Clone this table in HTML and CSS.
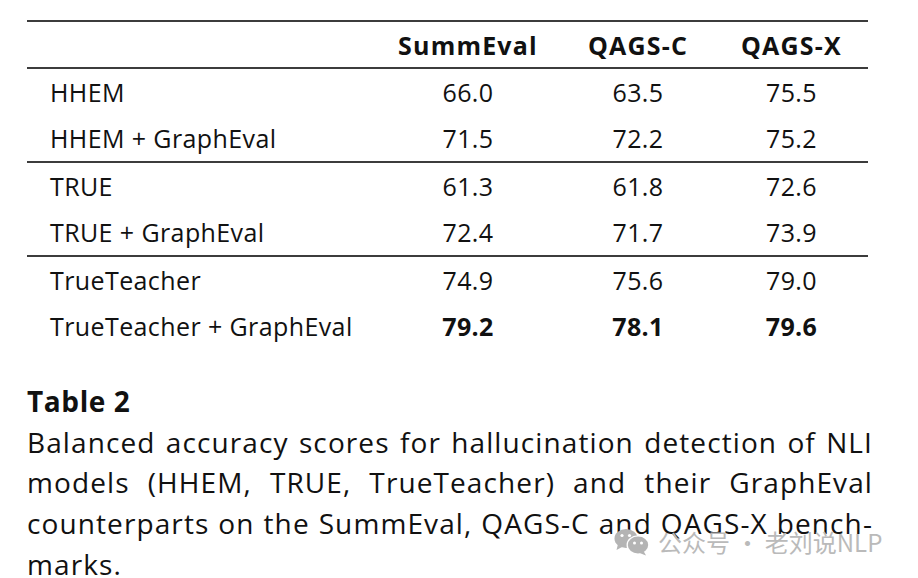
FILE: index.html
```html
<!DOCTYPE html>
<html>
<head>
<meta charset="utf-8">
<link rel="stylesheet" href="styles.css">
</head>
<body>
<div class="page">
  <div class="table">
    <div class="row head">
      <div class="cell label"></div>
      <div class="cell">SummEval</div>
      <div class="cell">QAGS-C</div>
      <div class="cell">QAGS-X</div>
    </div>
    <div class="row">
      <div class="cell label">HHEM</div>
      <div class="cell">66.0</div>
      <div class="cell">63.5</div>
      <div class="cell">75.5</div>
    </div>
    <div class="row group-end">
      <div class="cell label">HHEM + GraphEval</div>
      <div class="cell">71.5</div>
      <div class="cell">72.2</div>
      <div class="cell">75.2</div>
    </div>
    <div class="row">
      <div class="cell label">TRUE</div>
      <div class="cell">61.3</div>
      <div class="cell">61.8</div>
      <div class="cell">72.6</div>
    </div>
    <div class="row group-end">
      <div class="cell label">TRUE + GraphEval</div>
      <div class="cell">72.4</div>
      <div class="cell">71.7</div>
      <div class="cell">73.9</div>
    </div>
    <div class="row">
      <div class="cell label">TrueTeacher</div>
      <div class="cell">74.9</div>
      <div class="cell">75.6</div>
      <div class="cell">79.0</div>
    </div>
    <div class="row">
      <div class="cell label">TrueTeacher + GraphEval</div>
      <div class="cell best">79.2</div>
      <div class="cell best">78.1</div>
      <div class="cell best">79.6</div>
    </div>
  </div>
  <div class="caption">
    <div class="cap-title">Table 2</div>
    <span class="line">Balanced accuracy scores for hallucination detection of NLI</span>
    <span class="line">models (HHEM, TRUE, TrueTeacher) and their GraphEval</span>
    <span class="line">counterparts on the SummEval, QAGS-C and QAGS-X bench-</span>
    <span class="line last">marks.</span>
  </div>
  <div class="watermark">
    <svg class="wx" width="36" height="28" viewBox="0 0 36 28">
      <ellipse cx="12" cy="10.5" rx="11.5" ry="9.5" fill="#b4b4b4"/>
      <path d="M4 16 L2.5 22 L9 18.5 Z" fill="#b4b4b4"/>
      <circle cx="8" cy="7.5" r="1.6" fill="#fff"/>
      <circle cx="15.5" cy="7.5" r="1.6" fill="#fff"/>
      <ellipse cx="24" cy="17" rx="11.5" ry="9.8" fill="#fff"/>
      <ellipse cx="24" cy="17" rx="10.2" ry="8.5" fill="#b4b4b4"/>
      <path d="M29.5 23 L32 27.5 L25.5 25 Z" fill="#b4b4b4"/>
      <circle cx="20.5" cy="15" r="1.5" fill="#fff"/>
      <circle cx="27.5" cy="15" r="1.5" fill="#fff"/>
    </svg>
    <span class="wm-text">公众号 · 老刘说NLP</span>
  </div>
</div>
</body>
</html>
```
FILE: styles.css
```css
html, body {
  margin: 0;
  padding: 0;
  background: #fff;
}
body {
  font-family: "Open Sans", "Noto Sans", sans-serif;
  color: #111;
}
.page {
  position: relative;
  width: 918px;
  height: 578px;
  padding: 20px 0 0 27px;
  box-sizing: border-box;
  overflow: hidden;
}
.table {
  width: 841px;
  border-top: 2px solid #3c3c3c;
}
.row {
  display: grid;
  grid-template-columns: 348px 186px 154px 153px;
  height: 46px;
  align-items: center;
  font-size: 25px;
  letter-spacing: 0.4px;
}
.row.head {
  height: 45px;
  border-bottom: 2px solid #3c3c3c;
  font-weight: 700;
  letter-spacing: 1.2px;
}
.row.group-end {
  border-bottom: 2px solid #3c3c3c;
}
.cell {
  text-align: center;
}
.cell.label {
  text-align: left;
  padding-left: 23px;
}
.cell.best {
  font-weight: 700;
}
.caption {
  width: 846px;
  margin-top: 32px;
  font-size: 28px;
  line-height: 40.7px;
  letter-spacing: 1.1px;
}
.cap-title {
  font-weight: 700;
  letter-spacing: 0.6px;
}
.line {
  display: block;
  text-align: justify;
  text-align-last: justify;
}
.line.last {
  text-align-last: left;
}
.watermark {
  position: absolute;
  left: 614px;
  top: 527px;
  display: flex;
  align-items: center;
  gap: 8px;
}
.wm-text {
  font-family: "Noto Sans CJK SC", "Noto Sans", sans-serif;
  font-size: 24px;
  color: #bababa;
  line-height: 30px;
}
```
